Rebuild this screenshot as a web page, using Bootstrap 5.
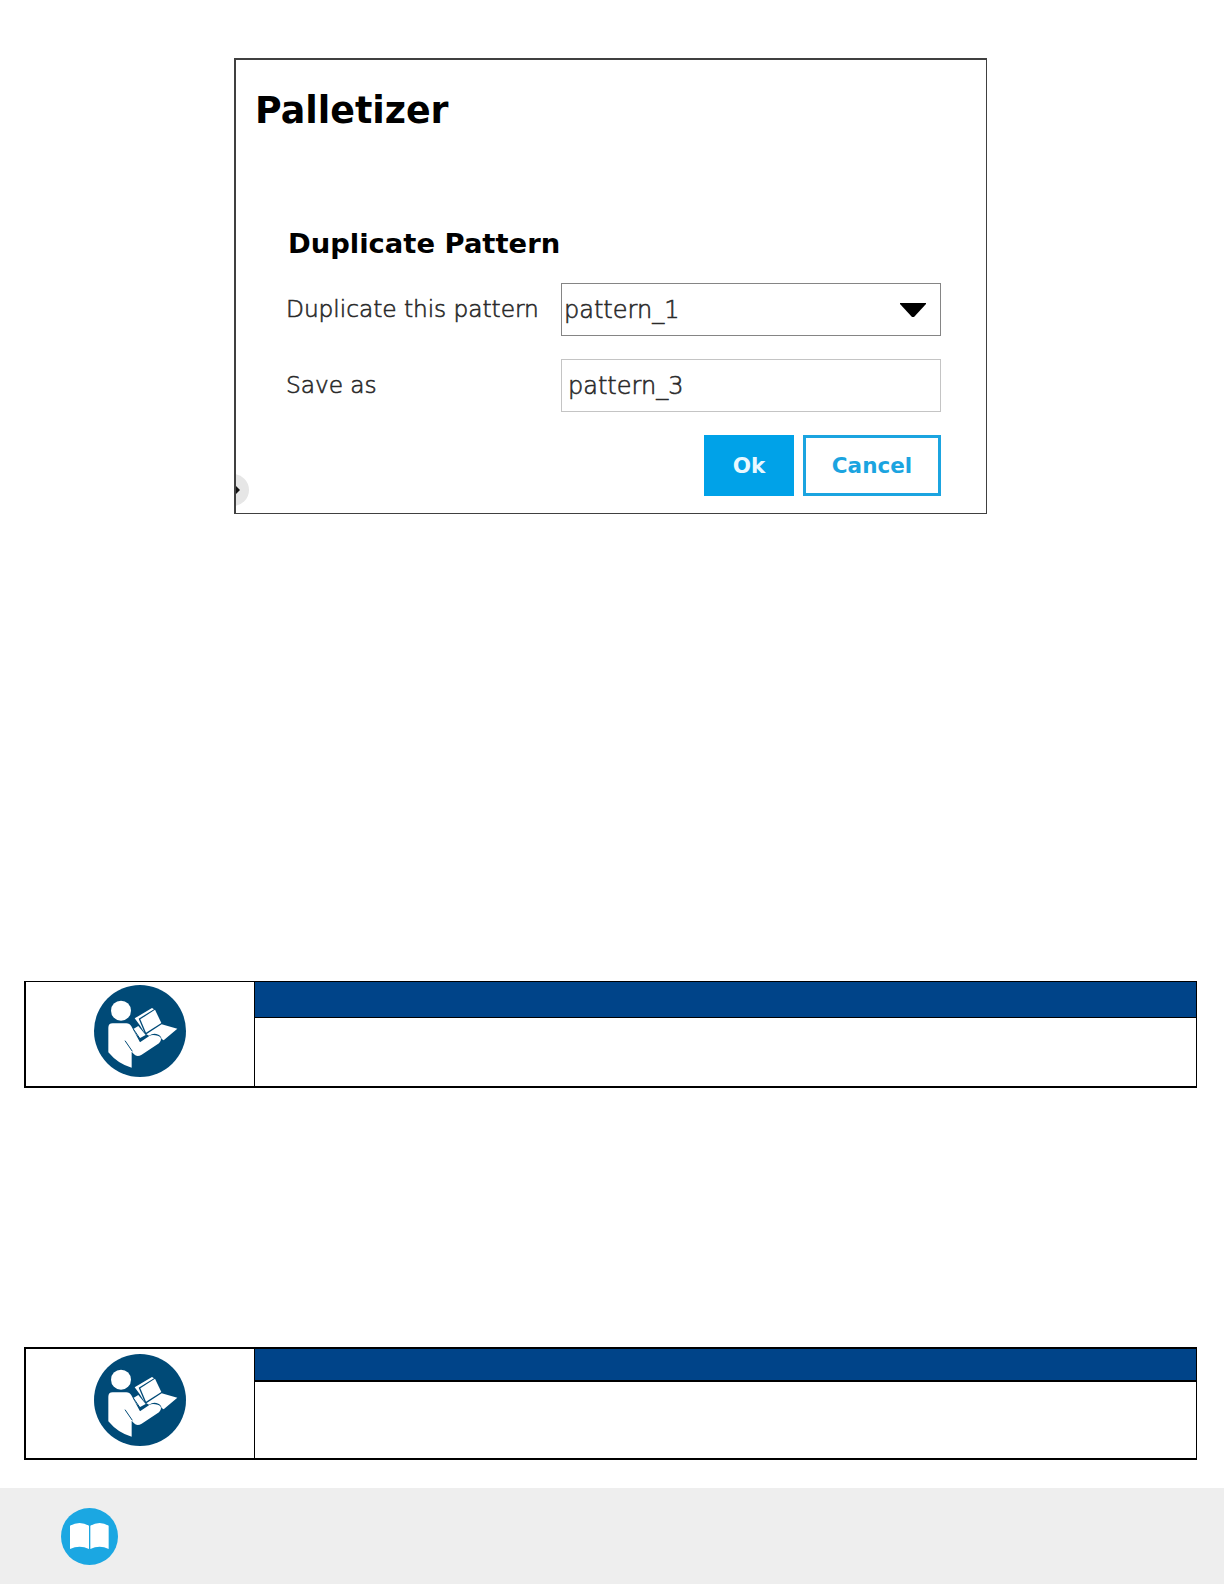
<!DOCTYPE html>
<html lang="en">
<head>
    <meta charset="UTF-8">
    <title>Palletizer - Duplicate Pattern</title>
    <link href="https://cdn.jsdelivr.net/npm/bootstrap@5.3.0/dist/css/bootstrap.min.css" rel="stylesheet">
    <style>
        body {
          height: 1584px;
          background: #fff;
          font-family: "DejaVu Sans", sans-serif;
        }
        .dialog-box {
          width: 753px;
          height: 456px;
          margin: 58px 0 0 234px;
          padding: 29px 45px 0 49px;
          border: 1px solid #404040;
          border-width: 2px 1px 1px 2px;
        }
        .dialog-title {
          margin-left: -30px;
          font-size: 36.4px;
          line-height: 43px;
          color: #000;
        }
        .dialog-heading {
          margin: 96px 0 23px 3px;
          font-size: 27.4px;
          line-height: 32px;
          color: #000;
        }
        .field-row {
          margin-bottom: 23px;
        }
        .field-label {
          width: 276px;
          padding-left: 1px;
          font-size: 23.3px;
          letter-spacing: -.05px;
        }
        .field-text {
          padding-left: 2px;
          font-size: 24px;
        }
        .thin-text {
          color: #2a2a2a;
          font-weight: 200;
          -webkit-text-stroke: .6px #2a2a2a;
          white-space: nowrap;
        }
        .field-box {
          height: 53px;
          padding-top: 1px;
          border: 1.5px solid #858585;
          border-radius: 0;
        }
        .field-light {
          border-color: #c4c4c4;
        }
        .combo-arrow {
          margin-right: 14px;
        }
        .btn-row {
          gap: 9px;
        }
        .dialog-btn {
          height: 61px;
          padding: 2px 0 0;
          border: 3px solid #1ba4e0;
          border-radius: 0;
          font-size: 21.5px;
          font-weight: bold;
          color: #1ba4e0;
        }
        .btn-ok {
          width: 90px;
          border-color: #00a2e8;
          background: #00a2e8;
          color: #e9f8ff;
        }
        .btn-cancel {
          width: 138px;
        }
        .side-handle {
          left: 0;
          bottom: 6px;
        }
        .notice {
          width: 1173px;
          margin-left: 24px;
          border: solid #000;
        }
        .notice-first {
          height: 107px;
          margin-top: 467px;
          border-width: 1px 1px 2px 2px;
        }
        .notice-second {
          height: 113px;
          margin-top: 259px;
          border-width: 2px 1px 2px 2px;
        }
        .notice-icon {
          width: 229px;
          padding-left: 68px;
          border-right: 1px solid #000;
        }
        .notice-first .notice-icon {
          padding-top: 3px;
        }
        .notice-second .notice-icon {
          padding-top: 5px;
        }
        .notice-bar {
          background: #004489;
        }
        .notice-first .notice-bar {
          height: 36px;
          border-bottom: 1px solid #000;
        }
        .notice-second .notice-bar {
          height: 33px;
          border-bottom: 2px solid #000;
        }
        .page-footer {
          height: 96px;
          margin-top: 28px;
          padding: 20px 0 0 61px;
          background: #eee;
        }
    </style>
</head>
<body class="d-flex flex-column overflow-hidden">

<!-- Dialog -->
<main class="dialog-box position-relative flex-shrink-0">
    <h1 class="dialog-title fw-bold mb-0">Palletizer</h1>
    <h2 class="dialog-heading fw-bold">Duplicate Pattern</h2>

    <div class="field-row d-flex align-items-center">
        <label class="field-label thin-text">Duplicate this pattern</label>
        <div class="field-box flex-fill d-flex align-items-center justify-content-between">
            <span class="field-text thin-text">pattern_1</span>
            <svg class="combo-arrow" width="26" height="14" viewBox="0 0 26 14"><path d="M0 0h26v1L14 14h-2L0 1z" fill="#000"/></svg>
        </div>
    </div>

    <div class="field-row d-flex align-items-center">
        <label class="field-label thin-text">Save as</label>
        <div class="field-box field-light flex-fill d-flex align-items-center ps-1">
            <span class="field-text thin-text">pattern_3</span>
        </div>
    </div>

    <div class="btn-row d-flex justify-content-end">
        <button class="btn dialog-btn btn-ok">Ok</button>
        <button class="btn dialog-btn btn-cancel">Cancel</button>
    </div>

    <svg class="side-handle position-absolute" width="14" height="34" viewBox="0 0 14 34">
        <circle cx="-3" cy="17" r="16" fill="#e6e6e6"/>
        <path d="M0 13l4 4-4 4z" fill="#111"/>
    </svg>
</main>

<!-- Shared symbol: person reading a manual -->
<svg class="d-none">
    <symbol id="read-manual" viewBox="30 30 276 276">
        <circle cx="168" cy="168" r="138" fill="#004a77"/>
        <g fill="#fff">
            <circle cx="111" cy="107" r="30"/>
            <path d="M73 158q0-13 13-13h41q10 0 15 9l26 48 28-19q7-4 18-2 16 2 17 11 0 8-6 13l-52 34q-14 8-23-1l-7-8v48q-40-10-70-46z"/>
            <path d="M148 162l15-9 22 27-18 10q-12-12-19-28z"/>
            <path d="M152 130l52-31 6 4-46 28 18 43q-14-24-30-44z"/>
            <path d="M169 133l44-29 19 40-46 29z"/>
            <path d="M187 178l46-30 47 13-41 35-6-4q-2-12-16-15-10-3-22 5z"/>
        </g>
        <path d="M123 197l22 32M148 162l22 32" fill="none" stroke="#004a77" stroke-width="3"/>
    </symbol>
</svg>

<!-- Notices -->
<section class="notice notice-first d-flex flex-shrink-0">
    <div class="notice-icon flex-shrink-0"><svg class="d-block" width="92" height="92"><use href="#read-manual"/></svg></div>
    <div class="flex-fill"><div class="notice-bar"></div></div>
</section>

<section class="notice notice-second d-flex flex-shrink-0">
    <div class="notice-icon flex-shrink-0"><svg class="d-block" width="92" height="92"><use href="#read-manual"/></svg></div>
    <div class="flex-fill"><div class="notice-bar"></div></div>
</section>

<!-- Footer -->
<footer class="page-footer flex-shrink-0">
    <svg class="d-block" width="57" height="57" viewBox="33 114 171 171">
        <circle cx="118.500" cy="199.500" r="85.500" fill="#1ba7e2"/>
        <path d="M60 167q29-16 57 0v70q-28-14-57 0zM121 167q28-16 55 0v70q-27-14-55 0z" fill="#fff"/>
    </svg>
</footer>

<script src="https://cdn.jsdelivr.net/npm/bootstrap@5.3.0/dist/js/bootstrap.bundle.min.js"></script>
</body>
</html>
